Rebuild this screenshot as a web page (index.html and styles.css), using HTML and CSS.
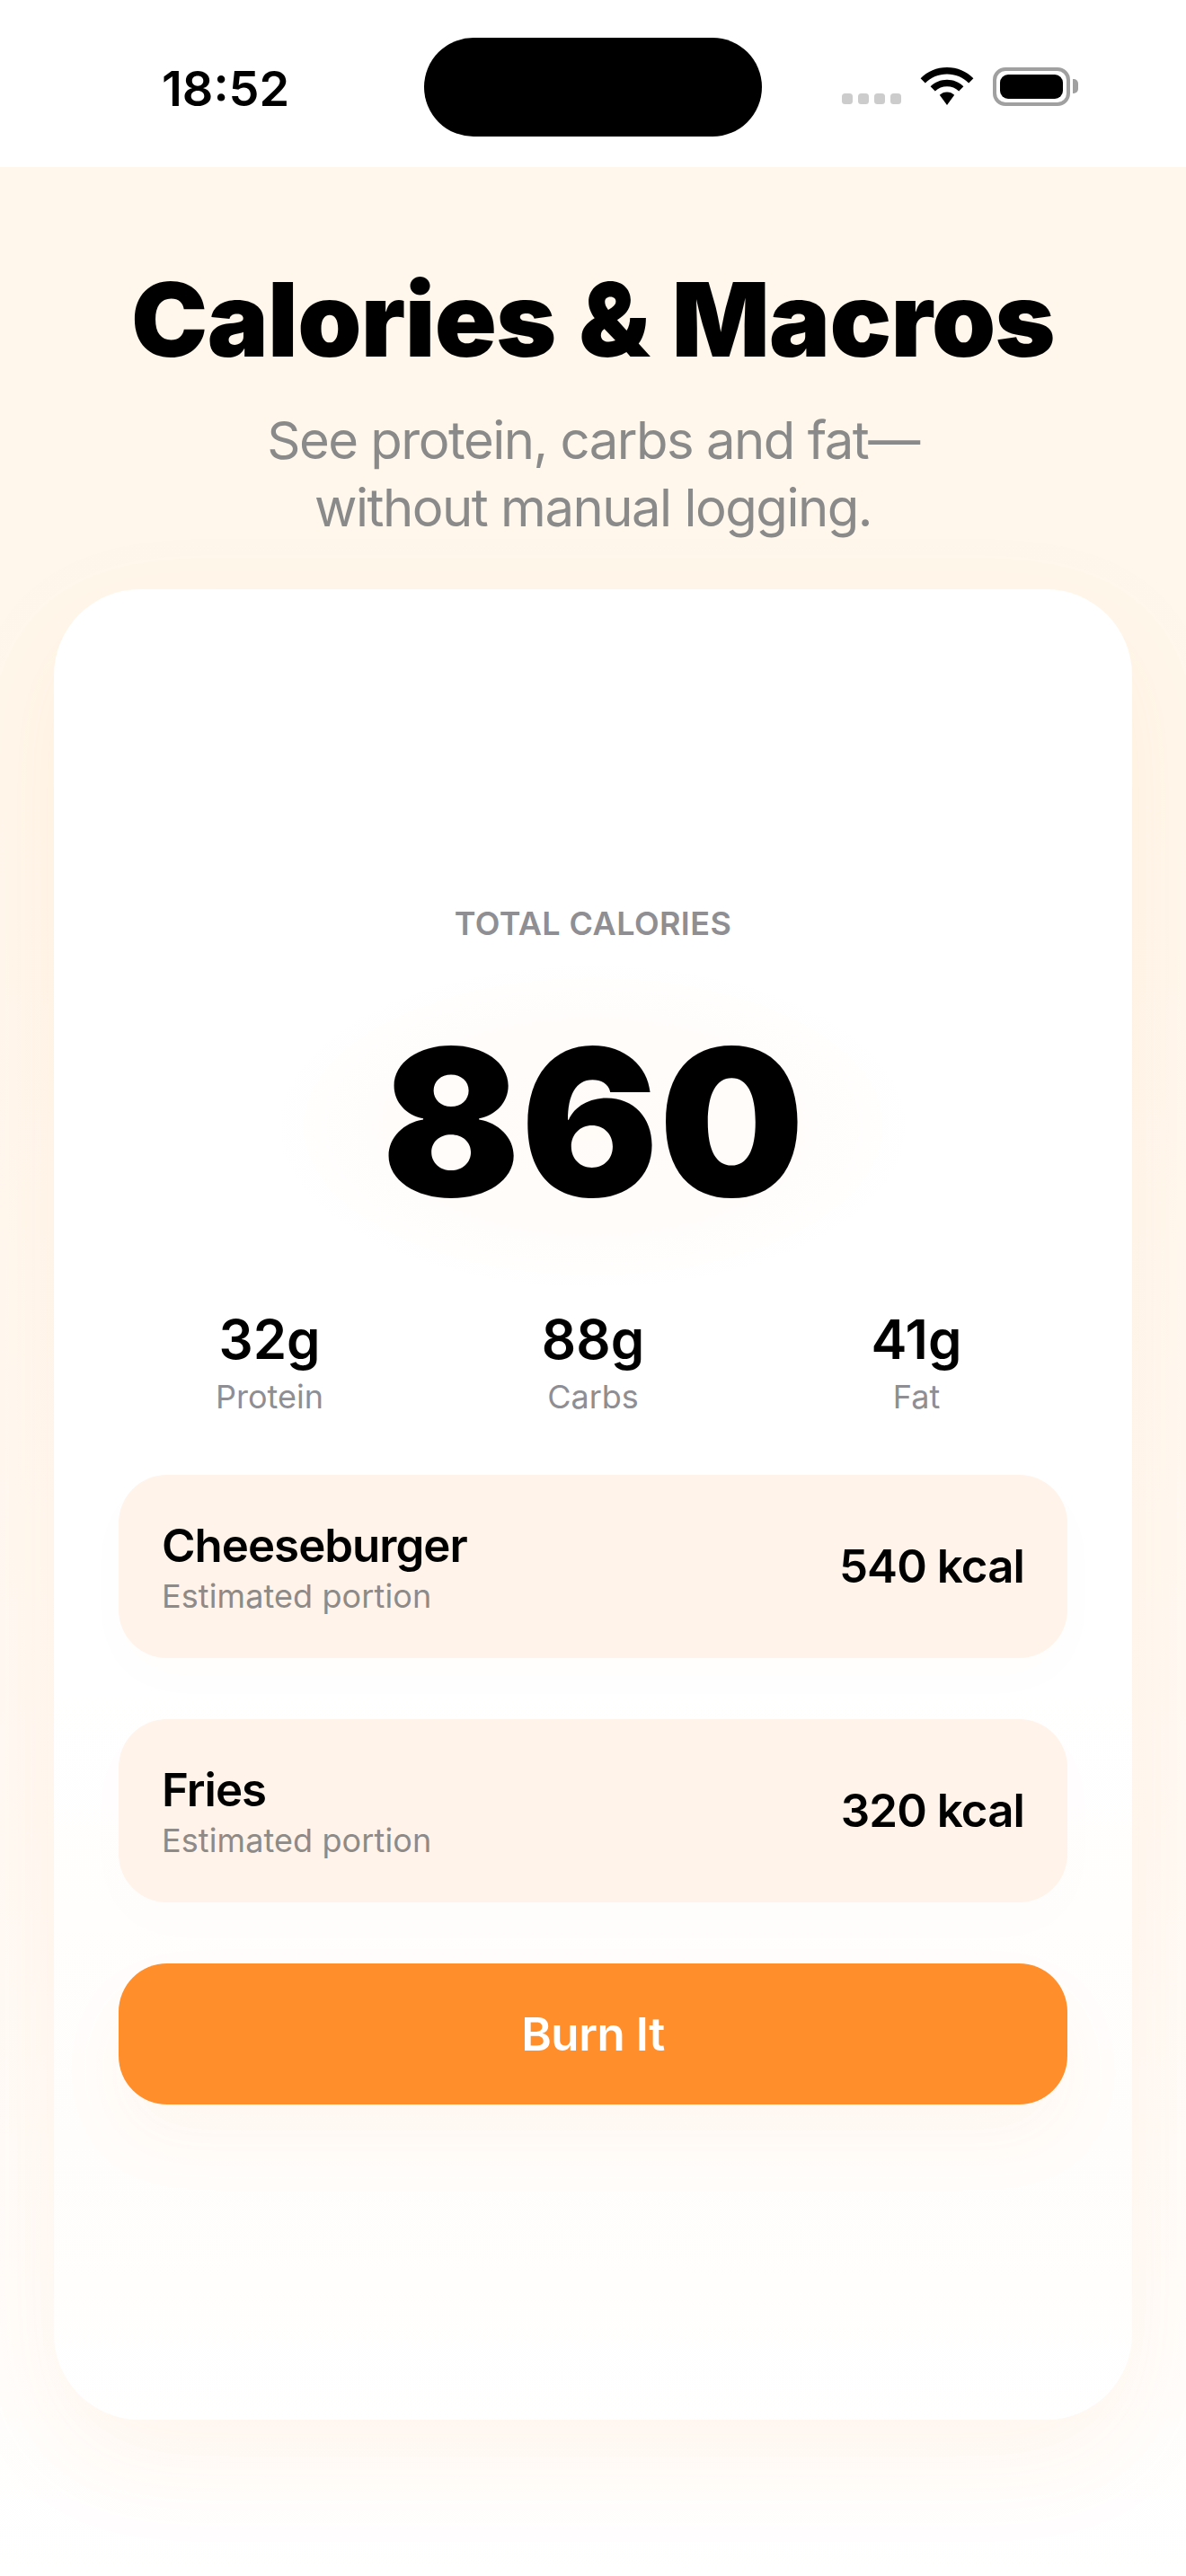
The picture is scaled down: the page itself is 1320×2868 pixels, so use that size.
FILE: index.html
```html
<!DOCTYPE html>
<html lang="en">
<head>
<meta charset="utf-8">
<title>Calories &amp; Macros</title>
<link rel="stylesheet" href="styles.css">
</head>
<body>
<div class="screen">
  <header class="status">
    <span class="time">18:52</span>
    <div class="island"></div>
    <div class="indicators">
      <div class="signal"><i></i><i></i><i></i><i></i></div>
      <svg class="wifi" width="60" height="42" viewBox="0 0 60 42"><path fill="#000" d="M30 0C18.500 0 8.200 4.400 .6 12.200L5.800 17.500C12.200 11 20.700 7.500 30 7.500S47.800 11 54.200 17.500L59.400 12.200C51.800 4.400 41.500 0 30 0Z"/><path fill="#000" d="M30 13.700C23 13.700 16.600 16.400 11.600 21.300L16.800 26.500C20.300 23.100 25 21.200 30 21.200S39.700 23.100 43.200 26.500L48.400 21.300C43.400 16.400 37 13.700 30 13.700Z"/><path fill="#000" d="M30 27.400C26.700 27.400 24.100 28.600 21.800 30.700L30 42L38.200 30.700C35.900 28.600 33.300 27.400 30 27.400Z"/></svg>
      <div class="battery"><div class="battery-fill"></div><div class="battery-cap"></div></div>
    </div>
  </header>
  <main class="main">
    <h1 class="title">Calories &amp; Macros</h1>
    <p class="subtitle">See protein, carbs and fat—<br>without manual logging.</p>
    <section class="card">
      <div class="total-label">TOTAL CALORIES</div>
      <div class="total-wrap"><div class="total">860</div></div>
      <div class="macros">
        <div class="macro"><div class="macro-value">32g</div><div class="macro-label">Protein</div></div>
        <div class="macro"><div class="macro-value">88g</div><div class="macro-label">Carbs</div></div>
        <div class="macro"><div class="macro-value">41g</div><div class="macro-label">Fat</div></div>
      </div>
      <div class="item">
        <div><div class="item-name">Cheeseburger</div><div class="item-note">Estimated portion</div></div>
        <div class="item-kcal">540 kcal</div>
      </div>
      <div class="item">
        <div><div class="item-name">Fries</div><div class="item-note">Estimated portion</div></div>
        <div class="item-kcal">320 kcal</div>
      </div>
      <button class="burn">Burn It</button>
    </section>
  </main>
</div>
</body>
</html>
```
FILE: styles.css
```css
* { box-sizing: border-box; }
html, body { margin: 0; padding: 0; }
body { font-family: Inter, "Liberation Sans", sans-serif; color: #000; background: #fff; }
.screen { width: 1320px; height: 2868px; overflow: hidden; display: flex; flex-direction: column; }

.status { height: 186px; flex: none; background: #fff; position: relative; display: flex; align-items: center; padding: 0 0 0 180px; }
.time { font-size: 54px; font-weight: 600; line-height: 1; margin-top: 12px; letter-spacing: 0; }
.island { position: absolute; left: 472px; top: 42px; width: 376px; height: 110px; border-radius: 55px; background: #000; }
.indicators { position: absolute; left: 937px; top: 75px; display: flex; align-items: flex-end; }
.signal { display: flex; gap: 6px; height: 12px; margin-right: 21px; margin-bottom: 1px; }
.signal i { display: block; width: 12px; height: 12px; border-radius: 3.500px; background: #ccc; }
.wifi { display: block; margin-right: 21px; margin-top: -1px; }
.battery { width: 86px; height: 43px; border: 4px solid #a0a0a0; border-radius: 14px; padding: 4px; position: relative; margin-bottom: -1px; }
.battery-fill { width: 100%; height: 100%; background: #000; border-radius: 9px; }
.battery-cap { position: absolute; right: -13px; top: 9px; width: 6px; height: 16px; background: #a0a0a0; border-radius: 0 5px 5px 0; }

.main { flex: 1; display: flex; flex-direction: column; align-items: center; background: linear-gradient(180deg, #fff7eb 0%, #fff7ed 30%, #fffaf5 70%, #ffffff 100%); padding-top: 108px; }
.title { margin: 0; font-size: 114px; line-height: 124px; font-weight: 900; letter-spacing: -.6px; word-spacing: 3px; text-align: center; }
.subtitle { margin: 35px 0 0; font-size: 58px; line-height: 75px; font-weight: 400; letter-spacing: -1.500px; color: #8a8a8a; text-align: center; }

.card { width: 1200px; height: 2038px; margin-top: 53px; background: linear-gradient(180deg, #fff 0%, #fff 60%, #fffdfb 85%, #fff 100%); border-radius: 96px; padding: 0 72px 1px; display: flex; flex-direction: column; justify-content: center; box-shadow: 0 40px 120px rgba(255, 140, 42, .08); }
.total-label { font-size: 36px; line-height: 44px; font-weight: 600; letter-spacing: .4px; color: #8e8e93; text-align: center; }
.total-wrap { margin-top: 39px; display: flex; justify-content: center; position: relative; }
.total-wrap::before { content: ""; position: absolute; left: 50%; top: -20px; width: 720px; height: 370px; margin-left: -360px; background: radial-gradient(closest-side, rgba(255,140,42,.035), rgba(255,140,42,.02) 65%, rgba(255,140,42,0)); }
.total { font-size: 228px; line-height: 320px; font-weight: 900; letter-spacing: 0; position: relative; }
.macros { margin-top: 46px; display: flex; gap: 24px; }
.macro { flex: 1; text-align: center; }
.macro-value { font-size: 60px; line-height: 72px; font-weight: 600; }
.macro-label { font-size: 36px; line-height: 44px; color: #8e8e93; margin-top: 6px; }
.item { height: 204px; margin-top: 68px; background: #fff3ea; border-radius: 54px; padding: 0 48px; display: flex; align-items: center; justify-content: space-between; box-shadow: 0 20px 60px rgba(255, 140, 42, .015); }
.macros + .item { margin-top: 65px; }
.item-name { font-size: 51px; line-height: 64px; font-weight: 600; letter-spacing: -1px; }
.item-note { font-size: 36px; line-height: 44px; letter-spacing: .1px; color: #8e8a88; margin-top: 2px; }
.item-kcal { font-size: 51px; line-height: 64px; font-weight: 600; letter-spacing: -.9px; }
.burn { height: 157px; margin-top: 68px; width: 100%; flex: none; border: 0; background: #ff8e2b; color: #fff; border-radius: 54px; font: 600 51px Inter, "Liberation Sans", sans-serif; letter-spacing: -.4px; box-shadow: 0 40px 80px rgba(255, 140, 42, .05); }
```
